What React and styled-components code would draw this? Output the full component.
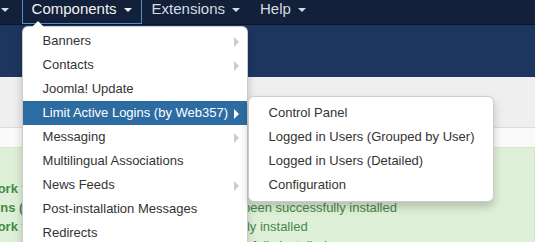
import React from "react";
import styled, { createGlobalStyle } from "styled-components";

const GlobalStyle = createGlobalStyle`
  html, body {
    margin: 0;
    padding: 0;
  }
  body {
    width: 535px;
    height: 242px;
    overflow: hidden;
    background: #fafafa;
    font-family: "Liberation Sans", Arial, sans-serif;
    font-size: 13px;
    line-height: 18px;
    color: #333;
  }
`;

const Navbar = styled.div`
  position: relative;
  z-index: 10;
  height: 24px;
  background: #132039;
  border-bottom: 1px solid #0c1629;
`;

const NavList = styled.ul`
  display: flex;
  margin: 0 0 0 -69px;
  padding: 0;
  list-style: none;
`;

const NavItem = styled.li`
  position: relative;
  padding: 0 ${(p) => (p.$wide ? "12px" : "9px")} 5px 9px;
  border: 1px solid ${(p) => (p.$open ? "#4d8fcf" : "transparent")};
  border-top: 0;
  font-size: 15px;
  line-height: 18px;
  color: ${(p) => (p.$open ? "#f2f2f2" : "#d6dae2")};
  white-space: nowrap;
`;

const Caret = styled.span`
  display: inline-block;
  vertical-align: top;
  width: 0;
  height: 0;
  margin: 8px 0 0 7px;
  border-top: 4px solid currentColor;
  border-left: 4px solid transparent;
  border-right: 4px solid transparent;
`;

const Dropdown = styled.ul`
  position: absolute;
  top: calc(100% + 3px);
  left: -1px;
  width: 226px;
  box-sizing: border-box;
  margin: 0;
  padding: 2px 0;
  list-style: none;
  background: #fff;
  border: 1px solid rgba(0, 0, 0, 0.2);
  border-radius: 6px;
  box-shadow: 0 5px 10px rgba(0, 0, 0, 0.2);
  font-size: 13px;
  line-height: 18px;
  color: #333;

  &::before {
    content: "";
    position: absolute;
    top: -7px;
    left: 8px;
    border-left: 7px solid transparent;
    border-right: 7px solid transparent;
    border-bottom: 7px solid rgba(0, 0, 0, 0.2);
  }
  &::after {
    content: "";
    position: absolute;
    top: -6px;
    left: 9px;
    border-left: 6px solid transparent;
    border-right: 6px solid transparent;
    border-bottom: 6px solid #fff;
  }
`;

const SubMenu = styled(Dropdown)`
  top: -5px;
  left: calc(100% + 1px);
  width: 246px;
  padding: 4px 0;

  &::before,
  &::after {
    display: none;
  }
`;

const MenuItem = styled.li`
  position: relative;
  padding: 3px 20px;
  white-space: nowrap;
  background: ${(p) => (p.$active ? "#2d6ca2" : "transparent")};
  color: ${(p) => (p.$active ? "#fff" : "#333")};
`;

const Arrow = styled.span`
  position: absolute;
  top: 8px;
  right: 8px;
  width: 0;
  height: 0;
  border-top: 5px solid transparent;
  border-bottom: 5px solid transparent;
  border-left: 5px solid ${(p) => (p.$active ? "#fff" : "#ccc")};
`;

const Header = styled.div`
  height: 52px;
  background: #1d3660;
`;

const Subhead = styled.div`
  height: 50px;
  background: #efefef;
  border-bottom: 1px solid #dcdcdc;
`;

const Content = styled.div`
  padding-top: 19px;
`;

const Alert = styled.div`
  margin-left: -120px;
  padding: 31px 15px 20px;
  background: #dff0d8;
  border: 1px solid #d6e9c6;
  color: #468847;
  font-size: 13px;
  line-height: 19px;
`;

const AlertLine = styled.div`
  white-space: nowrap;

  b {
    font-weight: bold;
  }
`;

const navItems = [
  { label: "Content", wide: true },
  { label: "Components", open: true },
  { label: "Extensions" },
  { label: "Help" },
];

const componentItems = [
  { label: "Banners", sub: true },
  { label: "Contacts", sub: true },
  { label: "Joomla! Update" },
  { label: "Limit Active Logins (by Web357)", sub: true, active: true },
  { label: "Messaging", sub: true },
  { label: "Multilingual Associations" },
  { label: "News Feeds", sub: true },
  { label: "Post-installation Messages" },
  { label: "Redirects" },
  { label: "Search" },
  { label: "Smart Search" },
  { label: "Tags" },
];

const loginItems = [
  "Control Panel",
  "Logged in Users (Grouped by User)",
  "Logged in Users (Detailed)",
  "Configuration",
];

const messages = [
  { title: "Web357 Framework", text: " v1.7.6 plugin has been successfully installed" },
  { title: "Limit Active Logins (Free)", text: " v3.2.5 for Joomla! package has been successfully installed" },
  { title: "Web357 Framework", text: " v1.7.15 (system plugin) was successfully installed" },
  { title: "Limit Active Logins", text: " v3.2.15 system plugin has been successfully installed" },
];

function ComponentsMenu() {
  return (
    <Dropdown>
      {componentItems.map((item) => (
        <MenuItem key={item.label} $active={item.active}>
          {item.label}
          {item.sub && <Arrow $active={item.active} />}
          {item.active && (
            <SubMenu>
              {loginItems.map((label) => (
                <MenuItem key={label}>{label}</MenuItem>
              ))}
            </SubMenu>
          )}
        </MenuItem>
      ))}
    </Dropdown>
  );
}

export default function App() {
  return (
    <>
      <GlobalStyle />
      <Navbar>
        <NavList>
          {navItems.map((item) => (
            <NavItem key={item.label} $open={item.open} $wide={item.wide}>
              {item.label}
              <Caret />
              {item.open && <ComponentsMenu />}
            </NavItem>
          ))}
        </NavList>
      </Navbar>
      <Header />
      <Subhead />
      <Content>
        <Alert>
          {messages.map((m, i) => (
            <AlertLine key={i}>
              <b>{m.title}</b>
              {m.text}
            </AlertLine>
          ))}
        </Alert>
      </Content>
    </>
  );
}
